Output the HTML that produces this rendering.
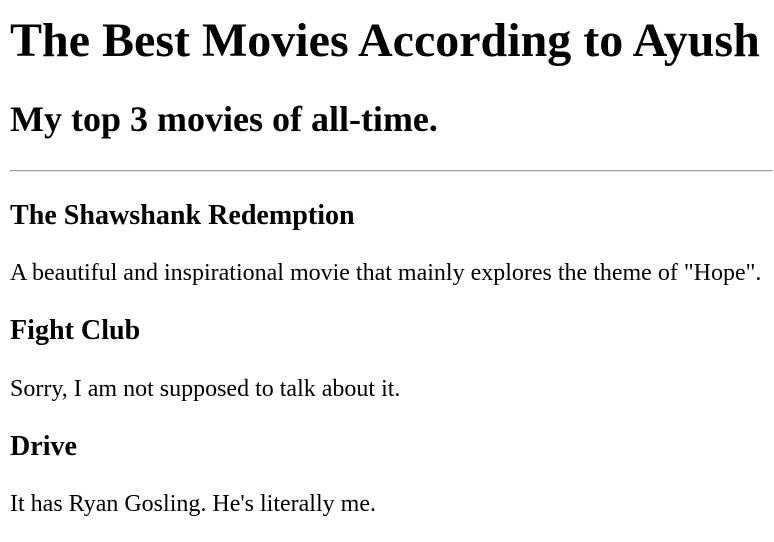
<!DOCTYPE html>
<html><head><style>
html{zoom:1.5}
body{margin:-14px 0.67px 0 6.67px;font-family:"Liberation Serif",serif;color:#000;background:#fff}
h1{position:relative;top:1.33px}
</style></head><body>
<h1>The Best Movies According to Ayush</h1>
<h2>My top 3 movies of all-time.</h2>
<hr>
<h3>The Shawshank Redemption</h3>
<p>A beautiful and inspirational movie that mainly explores the theme of "Hope".</p>
<h3>Fight Club</h3>
<p>Sorry, I am not supposed to talk about it.</p>
<h3>Drive</h3>
<p>It has Ryan Gosling. He's literally me.</p>
</body></html>
